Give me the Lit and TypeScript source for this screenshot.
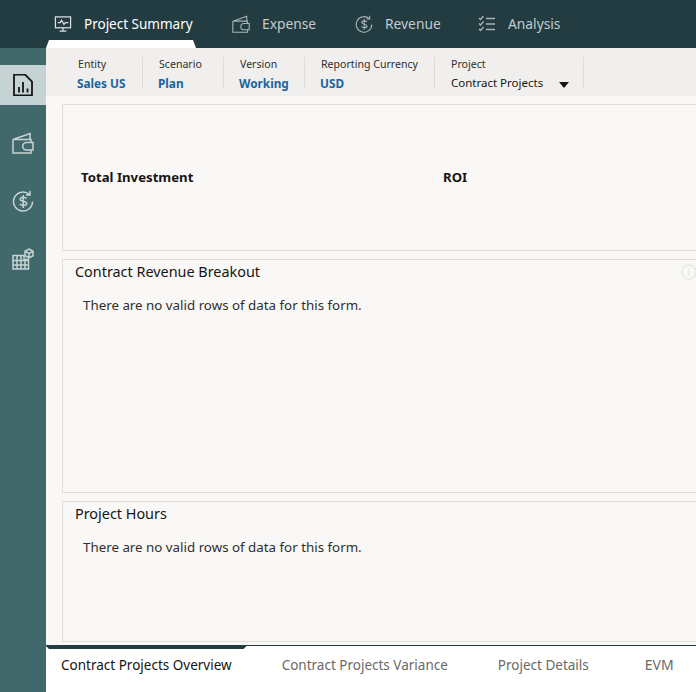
import { LitElement, html, css, svg } from "lit";
import { customElement } from "lit/decorators.js";

const icons = {
  monitor: svg`<rect x="1.500" y="2" width="16" height="11.500" /><path d="M4 8h2.500l1.500-2.500 2.500 4.500 1.500-2H15M9.500 13.500v3M6 17h7" />`,
  wallet: svg`<path d="M1 7.500L18 1.500V7.500M1 7.500h18v3M19 18v3H1V7.500" /><path d="M14.500 10.500H21v7.500h-6.500a3.750 3.750 0 0 1 0-7.500z" />`,
  revenue: svg`<path d="M20.500 11.500a9.500 9.500 0 1 1-3-6.900M18 1v4h-4" /><path d="M14.500 8.500c-.6-1-1.700-1.300-3.300-1.300-1.800 0-3 .8-3 2.100 0 2.800 6.500 1.300 6.500 4.200 0 1.300-1.300 2-3.300 2-1.600 0-2.800-.5-3.500-1.500M11.200 5v13" />`,
  analysis: svg`<path d="M1 3l1.500 1.500L5.500 1M1 8.500l1.500 1.500 3-3.500M1 14l1.500 1.500 3-3.500M8 3.500h9M8 9h9M8 14.500h9" />`,
  report: svg`<path d="M2 .5h11l7 7v14H2z" /><path d="M7 18.500V13M11 18.500V8M15.500 18.500v-4" />`,
  grid: svg`<path d="M1 7.500h11v4h4.500v9.500H1zM1 12.500h15.500M1 17h15.500M5 7.500v13.500M9 7.500v13.500M13 11.500v9.500" /><path d="M17 1l4 2.250v4.500L17 10l-4-2.250v-4.500zM13 3.250l4 2.250 4-2.250M17 5.500V10" />`,
};

function icon(d: unknown, size: number, box: number) {
  return html`<svg class="icon" width=${size} height=${size} viewBox="0 0 ${box} ${box}">${d}</svg>`;
}

@customElement("app-root")
export class AppRoot extends LitElement {
  static styles = css`
    :host {
      display: flex;
      flex-direction: column;
      width: 696px;
      height: 692px;
      overflow: hidden;
      font-family: "Noto Sans", sans-serif;
      color: #161513;
    }
    .icon {
      fill: none;
      stroke: currentColor;
      stroke-width: 1.3;
      flex: none;
    }
    .top {
      display: flex;
      height: 48px;
      flex: none;
      padding-left: 46px;
      background: #233c42;
    }
    .top-tab {
      position: relative;
      display: flex;
      align-items: center;
      gap: 12px;
      width: 123px;
      height: 48px;
      box-sizing: border-box;
      padding: 0 0 1px 36px;
      font-size: 13.800px;
      white-space: nowrap;
      color: #c3cbcc;
    }
    .top-tab .icon {
      opacity: 0.85;
    }
    .top-tab.on {
      width: 150px;
      padding-left: 8px;
      font-size: 13.500px;
      color: #fff;
    }
    .top-tab.on::after {
      content: "";
      position: absolute;
      left: 0;
      right: 0;
      bottom: 0;
      height: 8px;
      background: #fff;
      clip-path: polygon(3px 0, calc(100% - 3px) 0, 100% 100%, 0 100%);
    }
    .body {
      display: flex;
      flex: 1;
      min-height: 0;
    }
    .side {
      display: flex;
      flex-direction: column;
      gap: 18px;
      flex: none;
      width: 46px;
      padding-top: 17px;
      box-sizing: border-box;
      background: #41686b;
      color: #c6d3d4;
    }
    .side-item {
      display: flex;
      align-items: center;
      justify-content: center;
      height: 40px;
    }
    .side-item .icon {
      stroke-width: 1.500;
    }
    .side-item.on {
      background: #c6d3d4;
      color: #161513;
    }
    .side-item.on .icon {
      stroke-width: 1.800;
    }
    .main {
      display: flex;
      flex-direction: column;
      flex: 1;
      min-width: 0;
      background: #f9f8f6;
    }
    .pov {
      display: flex;
      flex: none;
      height: 48px;
      box-sizing: border-box;
      padding: 9px 0 7px 16px;
      background: #f1efed;
    }
    .pov-item {
      box-sizing: border-box;
      padding: 0 16px;
      border-right: 1px solid #dedcd9;
      font-size: 10.600px;
      line-height: 14px;
      white-space: nowrap;
      color: #2f2e2c;
    }
    .pov-item b {
      display: block;
      margin-top: 4px;
      margin-left: -1px;
      font-size: 11.800px;
      line-height: 16px;
      font-weight: 700;
      color: #1a64a0;
    }
    .pov-item .select {
      display: flex;
      align-items: center;
      gap: 19px;
      margin-top: 3px;
      font-size: 11.500px;
      line-height: 17px;
      color: #161513;
    }
    .pov-item .caret {
      width: 0;
      height: 0;
      margin: 5px 0 0 -3px;
      border: 5px solid transparent;
      border-top: 6px solid #161513;
      border-bottom: 0;
    }
    .cards {
      display: flex;
      flex-direction: column;
      flex: 1;
      gap: 8px;
      padding: 8px 0 3px 16px;
      margin-right: -12px;
      min-height: 0;
    }
    .card {
      box-sizing: border-box;
      border: 1px solid #e0dedb;
      background: #f9f8f6;
      position: relative;
      flex: none;
    }
    .card.kpi {
      display: flex;
      align-items: center;
      height: 147px;
      padding: 0 0 2px 18px;
      font-size: 13.200px;
      font-weight: 700;
    }
    .kpi span {
      flex: none;
      width: 362px;
    }
    .card h2 {
      margin: 0;
      padding: 2px 12px 0;
      font-size: 14.400px;
      line-height: 20px;
      font-weight: 400;
    }
    .card p {
      margin: 0;
      padding: 14px 20px 0;
      font-size: 13.330px;
      line-height: 18px;
      color: #2f2e2c;
    }
    .info {
      position: absolute;
      top: 4px;
      right: 10px;
      color: #e6e4e1;
    }
    .bottom {
      display: flex;
      flex: none;
      height: 47px;
      box-sizing: border-box;
      border-top: 1px solid #233c42;
      background: #fff;
      font-size: 13.500px;
      color: #6b6966;
    }
    .bottom div {
      position: relative;
      padding: 10px 25px 0;
      line-height: 19px;
      white-space: nowrap;
    }
    .bottom .on {
      padding-left: 15px;
      color: #161513;
    }
    .bottom .on::before {
      content: "";
      position: absolute;
      top: 0;
      left: 0;
      right: 10px;
      height: 3px;
      background: #233c42;
      clip-path: polygon(0 0, 100% 0, calc(100% - 3px) 100%, 3px 100%);
    }
    .bottom div:last-child {
      padding: 9px 25px 0 31px;
      font-size: 14px;
    }
  `;

  render() {
    return html`
      <div class="top">
        <div class="top-tab on">${icon(icons.monitor, 18, 19)}<span>Project Summary</span></div>
        <div class="top-tab">${icon(icons.wallet, 18, 22)}<span>Expense</span></div>
        <div class="top-tab">${icon(icons.revenue, 18, 22)}<span>Revenue</span></div>
        <div class="top-tab">${icon(icons.analysis, 18, 18)}<span>Analysis</span></div>
      </div>
      <div class="body">
        <div class="side">
          <div class="side-item on">${icon(icons.report, 22, 22)}</div>
          <div class="side-item">${icon(icons.wallet, 22, 22)}</div>
          <div class="side-item">${icon(icons.revenue, 22, 22)}</div>
          <div class="side-item">${icon(icons.grid, 22, 22)}</div>
        </div>
        <div class="main">
          <div class="pov">
            <div class="pov-item" style="width:81px">Entity<b>Sales US</b></div>
            <div class="pov-item" style="width:81px">Scenario<b>Plan</b></div>
            <div class="pov-item" style="width:81px">Version<b>Working</b></div>
            <div class="pov-item" style="width:130px">Reporting Currency<b>USD</b></div>
            <div class="pov-item" style="width:149px">
              Project
              <div class="select"><span>Contract Projects</span><i class="caret"></i></div>
            </div>
          </div>
          <div class="cards">
            <div class="card kpi"><span>Total Investment</span><span>ROI</span></div>
            <div class="card" style="height:234px">
              <h2>Contract Revenue Breakout</h2>
              <p>There are no valid rows of data for this form.</p>
              <svg class="icon info" width="16" height="16" viewBox="0 0 16 16">
                <circle cx="8" cy="8" r="7" /><path d="M8 7v5M8 4v1.500" />
              </svg>
            </div>
            <div class="card" style="height:141px">
              <h2>Project Hours</h2>
              <p>There are no valid rows of data for this form.</p>
            </div>
          </div>
          <div class="bottom">
            <div class="on">Contract Projects Overview</div>
            <div>Contract Projects Variance</div>
            <div>Project Details</div>
            <div>EVM</div>
          </div>
        </div>
      </div>
    `;
  }
}
